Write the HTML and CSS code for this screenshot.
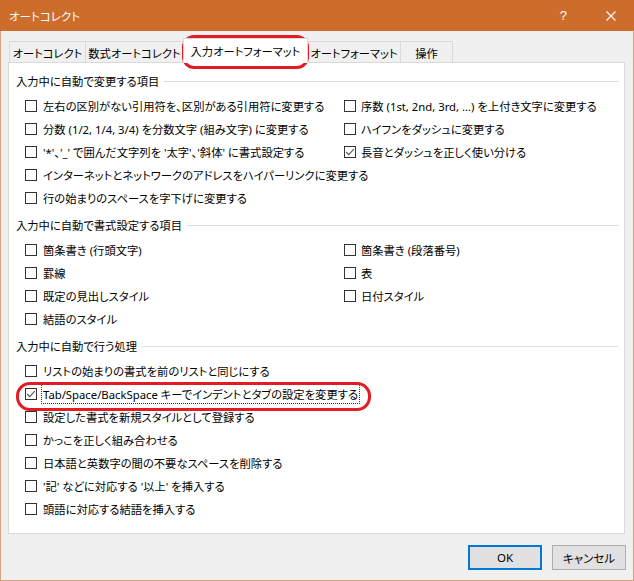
FILE: index.html
```html
<!DOCTYPE html>
<html lang="ja">
<head>
<meta charset="utf-8">
<title>オートコレクト</title>
<link rel="stylesheet" href="styles.css">
</head>
<body>
<div class="window">
  <div class="titlebar">
    <span class="title">オートコレクト</span>
    <span class="help">?</span>
    <span class="close"><svg width="10" height="10" viewBox="0 0 10 10"><path d="M0.5 0.5 L9.5 9.5 M9.5 0.5 L0.5 9.5" stroke="#fff" stroke-width="1.1" fill="none"/></svg></span>
  </div>
  <div class="frame">
    <div class="tabs">
      <div class="tab t1">オートコレクト</div>
      <div class="tab t2">数式オートコレクト</div>
      <div class="tab t3 active">入力オートフォーマット</div>
      <div class="tab t4">オートフォーマット</div>
      <div class="tab t5">操作</div>
    </div>
    <div class="panel">
      <section class="group">
        <div class="group-head"><span>入力中に自動で変更する項目</span></div>
        <div class="grid">
          <div class="item"><span class="box"></span><span class="lbl">左右の区別がない引用符を、区別がある引用符に変更する</span></div>
          <div class="item"><span class="box"></span><span class="lbl">序数 (1st, 2nd, 3rd, ...) を上付き文字に変更する</span></div>
          <div class="item"><span class="box"></span><span class="lbl">分数 (1/2, 1/4, 3/4) を分数文字 (組み文字) に変更する</span></div>
          <div class="item"><span class="box"></span><span class="lbl">ハイフンをダッシュに変更する</span></div>
          <div class="item"><span class="box"></span><span class="lbl">'*'、'_' で囲んだ文字列を '太字'、'斜体' に書式設定する</span></div>
          <div class="item"><span class="box checked"><svg width="10" height="10" viewBox="0 0 10 10"><path d="M1.2 5 L3.8 7.6 L8.8 2.2" stroke="#555" stroke-width="1.1" fill="none"/></svg></span><span class="lbl">長音とダッシュを正しく使い分ける</span></div>
          <div class="item"><span class="box"></span><span class="lbl">インターネットとネットワークのアドレスをハイパーリンクに変更する</span></div>
          <div class="item empty"></div>
          <div class="item"><span class="box"></span><span class="lbl">行の始まりのスペースを字下げに変更する</span></div>
        </div>
      </section>
      <section class="group">
        <div class="group-head"><span>入力中に自動で書式設定する項目</span></div>
        <div class="grid">
          <div class="item"><span class="box"></span><span class="lbl">箇条書き (行頭文字)</span></div>
          <div class="item"><span class="box"></span><span class="lbl">箇条書き (段落番号)</span></div>
          <div class="item"><span class="box"></span><span class="lbl">罫線</span></div>
          <div class="item"><span class="box"></span><span class="lbl">表</span></div>
          <div class="item"><span class="box"></span><span class="lbl">既定の見出しスタイル</span></div>
          <div class="item"><span class="box"></span><span class="lbl">日付スタイル</span></div>
          <div class="item"><span class="box"></span><span class="lbl">結語のスタイル</span></div>
        </div>
      </section>
      <section class="group">
        <div class="group-head"><span>入力中に自動で行う処理</span></div>
        <div class="list">
          <div class="item"><span class="box"></span><span class="lbl">リストの始まりの書式を前のリストと同じにする</span></div>
          <div class="item"><span class="box checked"><svg width="10" height="10" viewBox="0 0 10 10"><path d="M1.2 5 L3.8 7.6 L8.8 2.2" stroke="#555" stroke-width="1.1" fill="none"/></svg></span><span class="lbl focus">Tab/Space/BackSpace キーでインデントとタブの設定を変更する</span></div>
          <div class="item"><span class="box"></span><span class="lbl">設定した書式を新規スタイルとして登録する</span></div>
          <div class="item"><span class="box"></span><span class="lbl">かっこを正しく組み合わせる</span></div>
          <div class="item"><span class="box"></span><span class="lbl">日本語と英数字の間の不要なスペースを削除する</span></div>
          <div class="item"><span class="box"></span><span class="lbl">'記' などに対応する '以上' を挿入する</span></div>
          <div class="item"><span class="box"></span><span class="lbl">頭語に対応する結語を挿入する</span></div>
        </div>
      </section>
    </div>
    <div class="buttons">
      <button class="btn default">OK</button>
      <button class="btn">キャンセル</button>
    </div>
  </div>
  <div class="mark mark-tab"></div>
  <div class="mark mark-row"></div>
</div>
</body>
</html>
```

FILE: styles.css
```css
html, body {
  margin: 0;
  padding: 0;
}
body {
  background: #f0f0f0;
}
.window {
  position: relative;
  width: 634px;
  height: 581px;
  display: flex;
  flex-direction: column;
  font-family: "Noto Sans", "Noto Sans CJK JP", sans-serif;
  font-size: 11.3px;
  font-feature-settings: "palt";
  color: #000;
  background: #f0f0f0;
}
.titlebar {
  height: 31px;
  flex: none;
  background: #cc6d2c;
  color: #fff;
  display: flex;
  align-items: center;
  padding-left: 9px;
  font-size: 11.5px;
}
.title {
  flex: 1;
}
.help {
  font-family: "Liberation Sans", sans-serif;
  font-size: 13px;
  margin-right: 39px;
}
.close {
  display: flex;
  margin-right: 18px;
}
.frame {
  flex: 1;
  border: 1px solid #d9a27c;
  border-top: none;
  padding: 10px 8px 0 7px;
  display: flex;
  flex-direction: column;
}
.tabs {
  display: flex;
  align-items: flex-end;
  height: 21px;
  margin-left: 1px;
}
.tab {
  box-sizing: border-box;
  height: 21px;
  border: 1px solid #d9d9d9;
  border-bottom: none;
  background: #f0f0f0;
  display: flex;
  align-items: center;
  justify-content: center;
  white-space: nowrap;
  padding-top: 1px;
}
.tab + .tab {
  margin-left: -1px;
}
.t1 { width: 77px; }
.t2 { width: 99px; }
.t3 { width: 125px; }
.t4 { width: 94px; }
.t5 { width: 53px; }
.tab.active {
  position: relative;
  z-index: 1;
  height: 25px;
  margin-bottom: -1px;
  background: #fff;
  padding-top: 0;
}
.panel {
  box-sizing: border-box;
  height: 472px;
  border: 1px solid #d9d9d9;
  background: #fff;
  padding: 8px 6px 0 7px;
}
.group {
  margin-bottom: 6px;
}
.group-head {
  height: 20px;
  margin-bottom: 3px;
  display: flex;
  align-items: center;
  gap: 5px;
}
.group-head::after {
  content: "";
  flex: 1;
  height: 1px;
  background: #dcdcdc;
}
.grid {
  display: grid;
  grid-template-columns: 319px 1fr;
  padding-left: 9px;
}
.list {
  padding-left: 9px;
}
.item {
  height: 23px;
  display: flex;
  align-items: center;
  gap: 6px;
  white-space: nowrap;
}
.grid .item:nth-child(even) {
  gap: 5px;
}
.box {
  box-sizing: border-box;
  width: 12px;
  height: 12px;
  border: 1px solid #333;
  background: #fff;
  flex: none;
  display: flex;
  align-items: center;
  justify-content: center;
}
.lbl.focus {
  outline: 1px dotted #333;
  outline-offset: 1px;
}
.buttons {
  display: flex;
  justify-content: flex-end;
  gap: 10px;
  margin-top: 11px;
  margin-right: -1px;
}
.btn {
  box-sizing: border-box;
  width: 74px;
  height: 25px;
  background: #e1e1e1;
  border: 1px solid #adadad;
  font-family: "Noto Sans", "Noto Sans CJK JP", sans-serif;
  font-size: 11.5px;
  font-feature-settings: "palt";
  color: #000;
  padding: 0;
}
.btn.default {
  border: 2px solid #0078d7;
}
.mark {
  position: absolute;
  box-sizing: border-box;
  border: 3px solid #e31b23;
  pointer-events: none;
}
.mark-tab {
  left: 182px;
  top: 35px;
  width: 127px;
  height: 34px;
  border-radius: 12px;
}
.mark-row {
  left: 16px;
  top: 382px;
  width: 355px;
  height: 29px;
  border-radius: 14px;
}
```
